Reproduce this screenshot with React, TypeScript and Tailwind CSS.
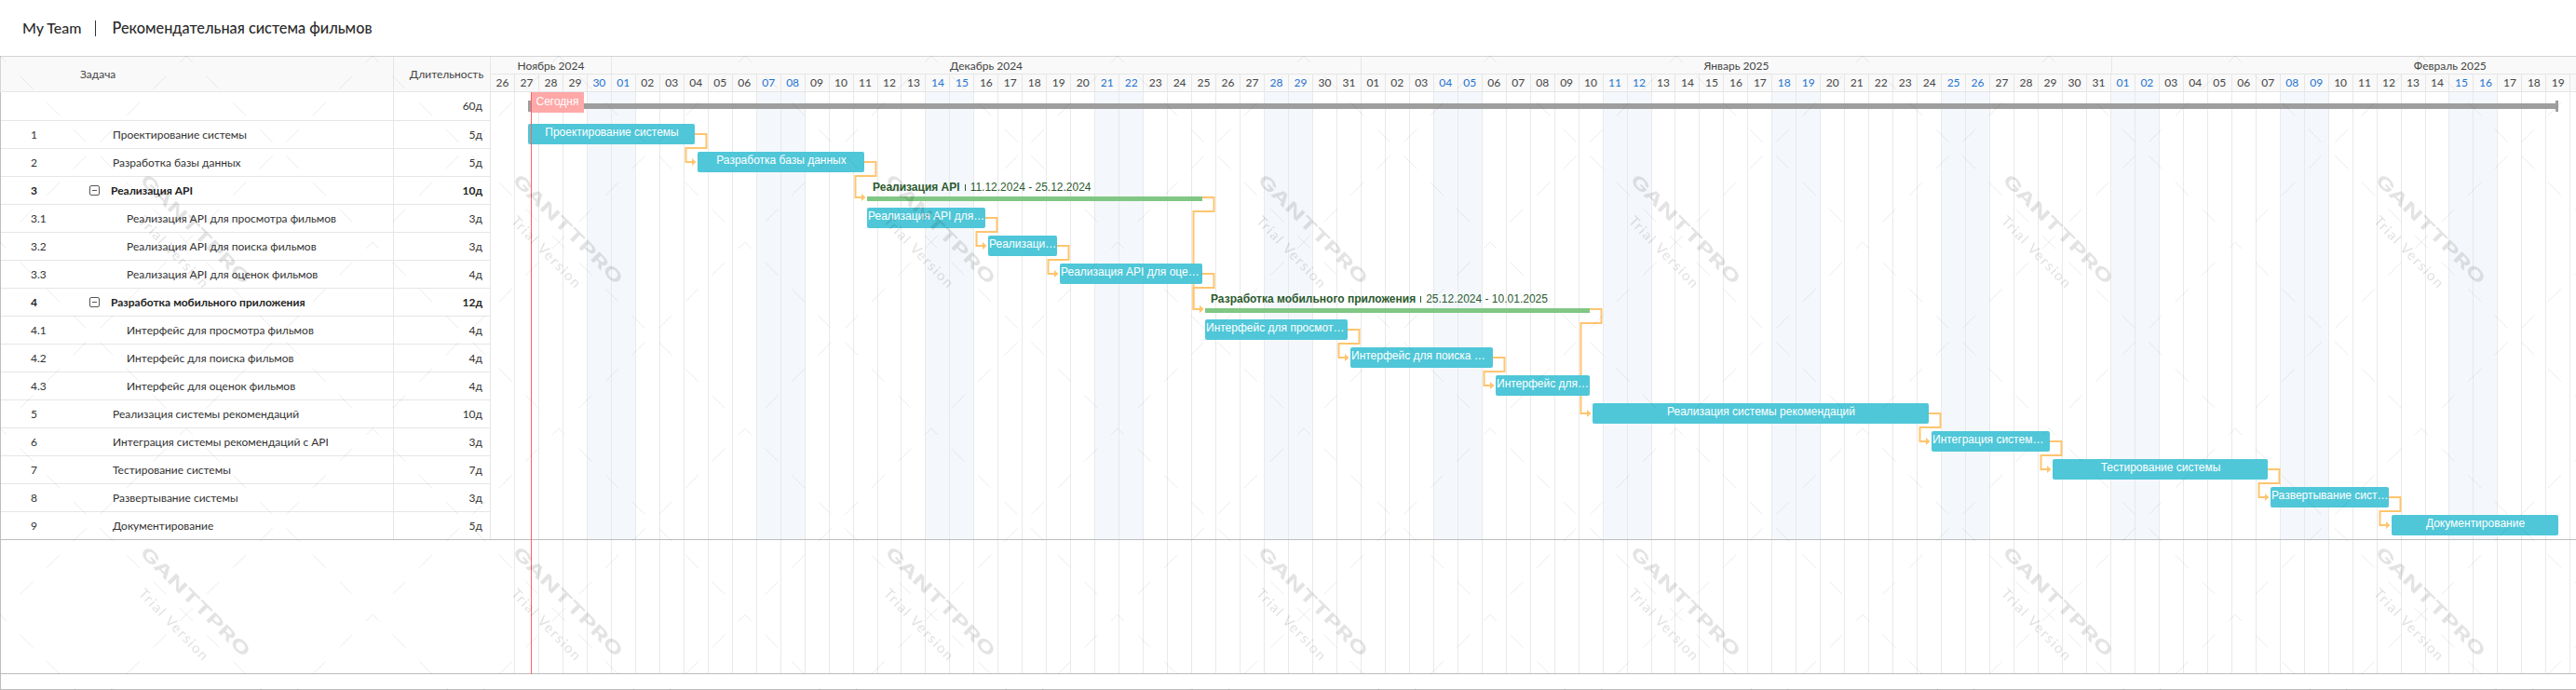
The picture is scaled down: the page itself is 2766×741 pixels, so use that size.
const W = 25.98;
const ORIGIN_X = 527;
const ORIGIN_Y = 99;

type Row = { no: string; name: string; dur: string; level: 0 | 1; bold?: boolean };
const rows: Row[] = [
  { no: "", name: "", dur: "60д", level: 0 },
  { no: "1", name: "Проектирование системы", dur: "5д", level: 0 },
  { no: "2", name: "Разработка базы данных", dur: "5д", level: 0 },
  { no: "3", name: "Реализация API", dur: "10д", level: 0, bold: true },
  { no: "3.1", name: "Реализация API для просмотра фильмов", dur: "3д", level: 1 },
  { no: "3.2", name: "Реализация API для поиска фильмов", dur: "3д", level: 1 },
  { no: "3.3", name: "Реализация API для оценок фильмов", dur: "4д", level: 1 },
  { no: "4", name: "Разработка мобильного приложения", dur: "12д", level: 0, bold: true },
  { no: "4.1", name: "Интерфейс для просмотра фильмов", dur: "4д", level: 1 },
  { no: "4.2", name: "Интерфейс для поиска фильмов", dur: "4д", level: 1 },
  { no: "4.3", name: "Интерфейс для оценок фильмов", dur: "4д", level: 1 },
  { no: "5", name: "Реализация системы рекомендаций", dur: "10д", level: 0 },
  { no: "6", name: "Интеграция системы рекомендаций с API", dur: "3д", level: 0 },
  { no: "7", name: "Тестирование системы", dur: "7д", level: 0 },
  { no: "8", name: "Развертывание системы", dur: "3д", level: 0 },
  { no: "9", name: "Документирование", dur: "5д", level: 0 },
];

const bars = [
  { name: "Проектирование системы", x1: 567, x2: 746, row: 1 },
  { name: "Разработка базы данных", x1: 749, x2: 928, row: 2 },
  { name: "Реализация API для просмотра фильмов", x1: 931, x2: 1058, row: 4 },
  { name: "Реализация API для поиска фильмов", x1: 1061, x2: 1135, row: 5 },
  { name: "Реализация API для оценок фильмов", x1: 1138, x2: 1291, row: 6 },
  { name: "Интерфейс для просмотра фильмов", x1: 1294, x2: 1447, row: 8 },
  { name: "Интерфейс для поиска фильмов", x1: 1450, x2: 1603, row: 9 },
  { name: "Интерфейс для оценок фильмов", x1: 1606, x2: 1707, row: 10 },
  { name: "Реализация системы рекомендаций", x1: 1710, x2: 2071, row: 11 },
  { name: "Интеграция системы рекомендаций с API", x1: 2074, x2: 2201, row: 12 },
  { name: "Тестирование системы", x1: 2204, x2: 2435, row: 13 },
  { name: "Развертывание системы", x1: 2438, x2: 2565, row: 14 },
  { name: "Документирование", x1: 2568, x2: 2747, row: 15 },
];

const links: [number, number, number, number, number][] = [
  [746, 144, 159, 749, 174],
  [928, 174, 189, 931, 212],
  [1058, 234, 249, 1061, 264],
  [1135, 264, 279, 1138, 294],
  [1291, 212, 227, 1294, 332],
  [1291, 294, 309, 1294, 332],
  [1447, 354, 369, 1450, 384],
  [1603, 384, 399, 1606, 414],
  [1707, 332, 347, 1710, 444],
  [2071, 444, 459, 2074, 474],
  [2201, 474, 489, 2204, 504],
  [2435, 504, 519, 2438, 534],
  [2565, 534, 549, 2568, 564],
];

const months = [
  { label: "Ноябрь 2024", days: 5 },
  { label: "Декабрь 2024", days: 31 },
  { label: "Январь 2025", days: 31 },
  { label: "Февраль 2025", days: 28 },
];

// 26 Nov 2024 is a Tuesday; Nov 30 and Dec 1 are the first weekend.
const days = Array.from({ length: 95 }, (_, i) => {
  const d = new Date(Date.UTC(2024, 10, 26 + i));
  const wd = d.getUTCDay();
  return { label: i < 86 ? String(d.getUTCDate()).padStart(2, "0") : "", weekend: wd === 0 || wd === 6 };
});

function MinusBox() {
  return (
    <svg width="11" height="11" viewBox="0 0 11 11" className="shrink-0">
      <rect x="0.5" y="0.5" width="10" height="10" rx="1.5" fill="#fff" stroke="#555" strokeWidth="1" />
      <path d="M3 5.5H8" stroke="#555" strokeWidth="1" />
    </svg>
  );
}

function TaskTable() {
  return (
    <div className="w-[527px] shrink-0 border-l border-[#bdbdbd] text-[12px] text-[#333]">
      {rows.map((r, i) => (
        <div
          key={i}
          className={`flex items-center border-b ${i === 0 ? "h-[31px]" : "h-[30px]"} ${
            i === rows.length - 1 ? "border-[#bdbdbd]" : "border-[#e6e6e6]"
          } ${r.bold ? "font-bold text-[#222]" : ""}`}
        >
          <div className="flex h-full w-[422px] items-center border-r border-[#e6e6e6]">
            <div className="w-[95px] shrink-0 pl-[32px]">{r.no}</div>
            {r.bold ? (
              <div className="flex items-center gap-[12px]">
                <MinusBox />
                <span>{r.name}</span>
              </div>
            ) : (
              <span className={r.level === 1 ? "pl-[40px]" : "pl-[25px]"}>{r.name}</span>
            )}
          </div>
          <div className="flex h-full w-[104px] items-center justify-end border-r border-[#e6e6e6] pr-[8px]">{r.dur}</div>
        </div>
      ))}
    </div>
  );
}

function DayGrid({ shaded }: { shaded: boolean }) {
  return (
    <div className="flex h-full">
      {days.map((d, i) => (
        <div
          key={i}
          className={`h-full shrink-0 border-r border-[#e8e9ea] ${shaded && d.weekend ? "bg-[#f4f8fc]" : ""}`}
          style={{ width: W }}
        />
      ))}
    </div>
  );
}

function Links() {
  return (
    <svg className="absolute left-0 top-0" width="2239" height="481" fill="none">
      {links.map(([x1, y1, ym, x2, y2], i) => {
        const X = (v: number) => v - ORIGIN_X;
        const Y = (v: number) => v - ORIGIN_Y;
        const d = `M${X(x1)} ${Y(y1)}H${X(x1 + 12.5)}V${Y(ym)}H${X(x2 - 12.5)}V${Y(y2)}H${X(x2 - 5)}`;
        return (
          <g key={i}>
            <path d={d} stroke="#ffc56e" strokeWidth="2" />
            <path d={`M${X(x2 - 6)} ${Y(y2 - 4)}L${X(x2 - 1.5)} ${Y(y2)}L${X(x2 - 6)} ${Y(y2 + 4)}Z`} fill="#ffc56e" />
          </g>
        );
      })}
    </svg>
  );
}

function Bars() {
  return (
    <>
      {bars.map((b) => (
        <div
          key={b.name}
          className="absolute flex h-[22px] rounded-[2px] bg-[#4fc7d8] pl-[1px] text-[12px] leading-[19px] text-white"
          style={{ left: b.x1 - ORIGIN_X, top: 103 + 30 * b.row - ORIGIN_Y, width: b.x2 - b.x1 }}
        >
          <span className="w-full shrink-0 truncate text-center">{b.name}</span>
        </div>
      ))}
    </>
  );
}

function SummaryBar({ x1, x2, y, name, dates, lx, ly }: { x1: number; x2: number; y: number; name: string; dates: string; lx: number; ly: number }) {
  return (
    <>
      <div className="absolute h-[5px] bg-[#81c784]" style={{ left: x1 - ORIGIN_X, top: y - ORIGIN_Y, width: x2 - x1 }} />
      <div
        className="absolute flex h-[16px] items-center whitespace-nowrap text-[12px] text-[#2c5a2e]"
        style={{ left: lx - ORIGIN_X, top: ly - ORIGIN_Y }}
      >
        <span className="font-bold">{name}</span>
        <span className="mx-[5px] h-[7px] w-[1px] bg-[#2c5a2e]" />
        <span>{dates}</span>
      </div>
    </>
  );
}

function Timeline() {
  return (
    <div className="relative h-full overflow-hidden font-['Liberation_Sans',sans-serif]">
      <DayGrid shaded />
      <Links />
      {/* project summary */}
      <div className="absolute h-[6px] bg-[#9e9e9e]" style={{ left: 567 - ORIGIN_X, top: 111 - ORIGIN_Y, width: 2746 - 567 }} />
      <div className="absolute h-[12px] w-[3px] bg-[#9e9e9e]" style={{ left: 567 - ORIGIN_X, top: 108 - ORIGIN_Y }} />
      <div className="absolute h-[12px] w-[3px] bg-[#9e9e9e]" style={{ left: 2744 - ORIGIN_X, top: 108 - ORIGIN_Y }} />
      <SummaryBar x1={931} x2={1291} y={211} name="Реализация API" dates="11.12.2024 - 25.12.2024" lx={937} ly={193} />
      <SummaryBar x1={1294} x2={1707} y={331} name="Разработка мобильного приложения" dates="25.12.2024 - 10.01.2025" lx={1300} ly={313} />
      <Bars />
      {/* today marker */}
      <div
        className="absolute flex h-[22px] w-[57px] justify-center bg-[#ffa8a8] text-[12px] leading-[20px] text-white"
        style={{ left: 570 - ORIGIN_X, top: 0 }}
      >
        Сегодня
      </div>
    </div>
  );
}

function Watermark() {
  const dash = "19.8 20.6";
  return (
    <svg className="pointer-events-none absolute left-0 top-[60px]" width="2766" height="681">
      <defs>
        <pattern id="wm" patternUnits="userSpaceOnUse" width="400" height="400">
          <g stroke="#000" strokeOpacity="0.07" strokeWidth="1" fill="none">
            <path d="M-7 -7L393 393" strokeDasharray={dash} />
            <path d="M-7 193L193 393M193 -7L393 193" strokeDasharray={dash} />
            <path d="M407 -7L7 393" strokeDasharray={dash} />
            <path d="M207 -7L7 193M407 193L207 393" strokeDasharray={dash} />
          </g>
          <text
            transform="translate(210 186) rotate(45)"
            textAnchor="middle"
            dominantBaseline="central"
            fontFamily="Inter, 'Liberation Sans', sans-serif"
            fontWeight="700"
            fontSize="18"
            textLength="158"
            lengthAdjust="spacingAndGlyphs"
            fill="#000"
            fillOpacity="0.11"
          >
            GANTTPRO
          </text>
          <text
            transform="translate(187 210) rotate(46)"
            textAnchor="middle"
            dominantBaseline="central"
            fontFamily="Lato, 'Liberation Sans', sans-serif"
            fontSize="15"
            textLength="100"
            fill="#000"
            fillOpacity="0.12"
          >
            Trial Version
          </text>
        </pattern>
      </defs>
      <rect width="2766" height="681" fill="url(#wm)" />
    </svg>
  );
}

export default function App() {
  return (
    <div className="relative h-[741px] w-full overflow-hidden bg-white font-['Lato','Noto_Sans',sans-serif]">
      <div className="flex h-[60px] items-center pl-[24px] text-[16px] font-medium text-[#2b2b2b]">
        <span>My Team</span>
        <span className="mx-[15px] h-[17px] w-[1px] bg-[#333]" />
        <span className="pl-[2px] text-[16.3px]">Рекомендательная система фильмов</span>
      </div>

      {/* header */}
      <div className="flex h-[39px] border-y border-[#d4d4d4] border-b-[#e6e6e6] bg-[#f9f9f9] text-[12px] text-[#444]">
        <div className="flex w-[423px] shrink-0 items-center border-l border-r border-[#d4d4d4] border-r-[#e6e6e6] pl-[85px]">Задача</div>
        <div className="flex w-[104px] shrink-0 items-center justify-center border-r border-[#e6e6e6] pl-[10px]">Длительность</div>
        <div className="min-w-0 flex-1 overflow-hidden">
          <div className="flex h-[19px] border-b border-[#e6e6e6]">
            {months.map((m) => (
              <div
                key={m.label}
                className="flex shrink-0 items-center justify-center border-r border-[#e6e6e6] pt-[1px]"
                style={{ width: m.days * W }}
              >
                {m.label}
              </div>
            ))}
          </div>
          <div className="flex h-[18px]">
            {days.map((d, i) => (
              <div
                key={i}
                className={`flex shrink-0 items-center justify-center border-r border-[#e6e6e6] ${d.weekend ? "text-[#1e73d2]" : ""}`}
                style={{ width: W }}
              >
                {d.label}
              </div>
            ))}
          </div>
        </div>
      </div>

      {/* rows */}
      <div className="flex h-[481px]">
        <TaskTable />
        <div className="min-w-0 flex-1 border-b border-[#bdbdbd]">
          <Timeline />
        </div>
      </div>

      {/* empty area */}
      <div className="flex h-[144px] border-b border-[#bdbdbd]">
        <div className="w-[527px] shrink-0 border-l border-[#bdbdbd]" />
        <div className="min-w-0 flex-1 overflow-hidden">
          <DayGrid shaded={false} />
        </div>
      </div>
      <div className="h-[17px] border-b border-l border-[#bdbdbd]" />

      {/* today line */}
      <div className="absolute left-[570px] top-[99px] h-[625px] w-[1px] bg-[#ff6060]" />

      <Watermark />
    </div>
  );
}
